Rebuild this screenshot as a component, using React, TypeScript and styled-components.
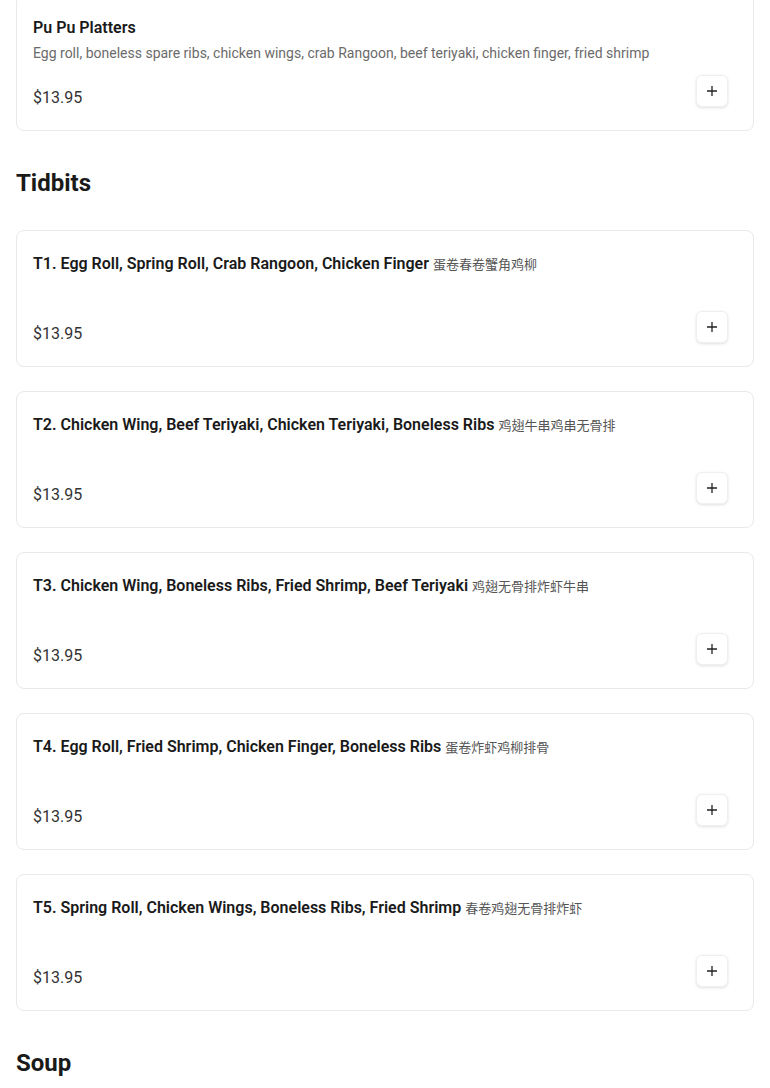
import * as React from 'react';
import styled, {createGlobalStyle} from 'styled-components';

const GlobalStyle = createGlobalStyle`
  body {
    margin: 0;
    background: #fff;
    font-family: Roboto, "Noto Sans CJK SC", sans-serif;
    color: #1a1a1a;
  }
`;

const Page = styled.div`
  padding: 0 16px;
  margin-top: -6px;
`;

const Section = styled.section`
  & + & {
    margin-top: 36px;
  }
`;

const Header = styled.h2`
  font-size: 24px;
  line-height: 32px;
  font-weight: 700;
  margin: 0 0 31px;
  color: #1a1a1a;
`;

const List = styled.div`
  display: flex;
  flex-direction: column;
  gap: 24px;
`;

const Card = styled.div`
  background: #fff;
  border: 1px solid #e9e9e9;
  border-radius: 8px;
  padding: 21px 16px 20px;
`;

const Title = styled.div`
  font-size: 16px;
  line-height: 24px;
  font-weight: 600;
  color: #1a1a1a;

  > .cn {
    font-family: "Noto Sans CJK SC", sans-serif;
    font-weight: 400;
    font-size: 13px;
    line-height: 0;
    color: #555;
  }
`;

const Desc = styled.div`
  margin-top: 3px;
  font-size: 14px;
  line-height: 20px;
  min-height: 20px;
  color: #6b6b6b;
`;

const Row = styled.div`
  margin-top: 12px;
  display: flex;
  justify-content: space-between;
  align-items: flex-end;
`;

const Price = styled.div`
  font-size: 16px;
  line-height: 24px;
  color: #333;
`;

const AddButton = styled.button`
  width: 32px;
  height: 32px;
  margin-bottom: 3px;
  margin-right: 9px;
  border: 1px solid #f0f0f0;
  border-radius: 6px;
  background: #fff;
  box-shadow: 0 1px 3px rgba(0, 0, 0, 0.12);
  display: flex;
  align-items: center;
  justify-content: center;
  padding: 0;
  cursor: pointer;
  color: #222;
`;

type Item = { name: string; cn?: string; desc?: string; price: string };

const Plus = () => (
  <svg width="12" height="12" viewBox="0 0 12 12" fill="none" stroke="currentColor" strokeWidth="1.3">
    <path d="M6 1v10M1 6h10"/>
  </svg>
);

function MenuCard({item}: { item: Item }) {
  return <Card>
    <Title>
      {item.name}
      {item.cn && <> <span className="cn">{item.cn}</span></>}
    </Title>
    <Desc>{item.desc}</Desc>
    <Row>
      <Price>{item.price}</Price>
      <AddButton aria-label="add"><Plus/></AddButton>
    </Row>
  </Card>;
}

const platters: Item[] = [
  {
    name: 'Pu Pu Platters',
    desc: 'Egg roll, boneless spare ribs, chicken wings, crab Rangoon, beef teriyaki, chicken finger, fried shrimp',
    price: '$13.95'
  }
];

const tidbits: Item[] = [
  {name: 'T1. Egg Roll, Spring Roll, Crab Rangoon, Chicken Finger', cn: '蛋卷春卷蟹角鸡柳', price: '$13.95'},
  {name: 'T2. Chicken Wing, Beef Teriyaki, Chicken Teriyaki, Boneless Ribs', cn: '鸡翅牛串鸡串无骨排', price: '$13.95'},
  {name: 'T3. Chicken Wing, Boneless Ribs, Fried Shrimp, Beef Teriyaki', cn: '鸡翅无骨排炸虾牛串', price: '$13.95'},
  {name: 'T4. Egg Roll, Fried Shrimp, Chicken Finger, Boneless Ribs', cn: '蛋卷炸虾鸡柳排骨', price: '$13.95'},
  {name: 'T5. Spring Roll, Chicken Wings, Boneless Ribs, Fried Shrimp', cn: '春卷鸡翅无骨排炸虾', price: '$13.95'},
];

export default function App() {
  return <>
    <GlobalStyle/>
    <Page>
      <Section>
        <List>
          {platters.map((it, i) => <MenuCard key={i} item={it}/>)}
        </List>
      </Section>
      <Section>
        <Header>Tidbits</Header>
        <List>
          {tidbits.map((it, i) => <MenuCard key={i} item={it}/>)}
        </List>
      </Section>
      <Section>
        <Header>Soup</Header>
      </Section>
    </Page>
  </>;
}
